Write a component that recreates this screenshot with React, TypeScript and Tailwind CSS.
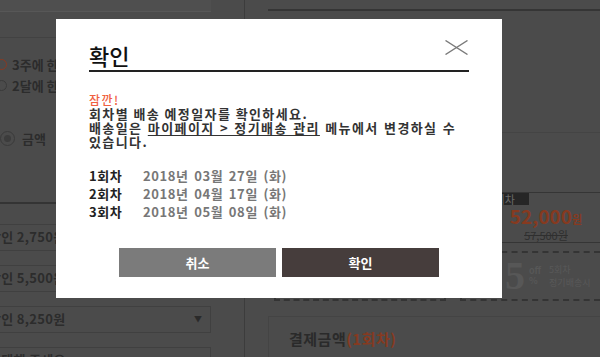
import type { ReactNode } from 'react';

const dates = [
  { no: '1회차', date: '2018년 03월 27일 (화)' },
  { no: '2회차', date: '2018년 04월 17일 (화)' },
  { no: '3회차', date: '2018년 05월 08일 (화)' },
];

const selects = ['할인 2,750원', '할인 5,500원', '할인 8,250원', '선택해 주세요.'];

function Radio({ checked, children }: { checked?: boolean; children: ReactNode }) {
  return (
    <div className="flex h-[21px] items-center gap-[5px] -ml-[4px]">
      <span
        className={`h-[11px] w-[11px] rounded-full border ${
          checked ? 'border-[#8a3a22]' : 'border-[#3a3a3a]'
        }`}
      />
      <span className="text-[13px] font-bold text-[#2c2c2c]">{children}</span>
    </div>
  );
}

function Backdrop() {
  return (
    <div className="flex h-full w-full bg-[#4b4b4b] text-[#2c2c2c]">
      <div className="w-[245px] shrink-0 border-r border-[#3c3c3c]">
        <div className="w-[211px]">
          <div className="h-[12px] border-b border-[#575757] bg-[#4f4f4f]" />
          <div className="h-[26px] border-b border-[#424242]" />
          <div className="flex flex-col pt-[16px]">
            <Radio checked>3주에 한번</Radio>
            <Radio>2달에 한번</Radio>
          </div>
          <div className="mt-[33px] flex items-center gap-[7px]">
            <span className="flex h-[15px] w-[15px] items-center justify-center rounded-full border border-[#3a3a3a]">
              <span className="h-[7px] w-[7px] rounded-full bg-[#3c3c3c]" />
            </span>
            <span className="text-[13px] font-bold">금액</span>
          </div>
          <div className="mt-[53px] border-b-2 border-[#343434]" />
          <div className="mt-[20px] flex flex-col gap-[14px]">
            {selects.map((s) => (
              <div
                key={s}
                className="-ml-[14px] flex h-[27px] items-center justify-between border border-[#404040] pl-[2px] pr-[8px]"
              >
                <span className="text-[13px] font-bold tracking-[0.3px]">{s}</span>
                <span className="text-[8px] text-[#2a2a2a]">▼</span>
              </div>
            ))}
          </div>
        </div>
      </div>
      <div className="flex-1 pl-[23px]">
        <div className="h-[9px]" />
        <div className="h-[123px] border-t-2 border-[#353535]" />
        <div className="h-[60px] border-t border-[#444444]" />
        <div className="flex h-[51px] border-y border-[#353535]">
          <div className="flex-1" />
          <div className="w-[130px]">
            <div className="flex h-[12px] w-[59px] items-center justify-end bg-[#262626] pr-[14px] text-[11px] text-[#6a6a6a]">
              1회차
            </div>
            <div className="mt-[1px] flex flex-col items-center pl-[22px]">
              <span className="text-[19px] font-bold leading-[20px] text-[#863a20]">
                52,000<span className="text-[11px]">원</span>
              </span>
              <span className="text-[11px] leading-[13px] text-[#2f2f2f] line-through">57,500원</span>
            </div>
          </div>
        </div>
        <div className="mt-[8px] flex gap-[14px] pl-[6px]">
          <div className="h-[50px] w-[172px] border-2 border-dashed border-[#343434]" />
          <div className="flex h-[50px] flex-1 items-center border-2 border-r-0 border-dashed border-[#343434] pl-[43px]">
            <span className="font-['Liberation_Serif',serif] text-[40px] font-bold text-[#575757]">5</span>
            <span className="ml-[4px] flex flex-col text-[9px] font-bold leading-[10px] text-[#575757]">
              <span>off</span>
              <span>%</span>
            </span>
            <span className="ml-[8px] flex flex-col text-[9px] leading-[13px] text-[#595959]">
              <span>5회차</span>
              <span>정기배송시</span>
            </span>
          </div>
        </div>
        <div className="mt-[15px] h-[60px] border-l border-t border-[#444444] pl-[20px] pt-[9px]">
          <span className="text-[15px] font-bold tracking-[0.5px] text-[#2a2a2a]">
            결제금액<span className="text-[#863a20]">(1회차)</span>
          </span>
        </div>
      </div>
    </div>
  );
}

export default function App() {
  return (
    <div className="relative h-[357px] w-[600px] overflow-hidden font-['Noto_Sans_CJK_KR','Noto_Sans',sans-serif]">
      <Backdrop />
      <div className="absolute left-[56px] top-[19px] h-[279px] w-[446px] bg-white px-[33px] pt-[21px]">
        <div className="flex items-start justify-between border-b-2 border-[#222]">
          <h1 className="text-[22px] font-medium leading-[30px] text-[#111]">확인</h1>
          <svg width="23" height="15" viewBox="0 0 23 15" className="mr-px">
            <path d="M0.5 0.5L22.5 14.5M22.5 0.5L0.5 14.5" stroke="#7a7a7a" strokeWidth="1.4" fill="none" />
          </svg>
        </div>
        <div className="mt-[21px] break-keep text-[13px] leading-[14px] tracking-[1.4px]">
          <p className="text-[12px] font-medium text-[#f0603f]">잠깐!</p>
          <p className="font-bold text-[#333]">회차별 배송 예정일자를 확인하세요.</p>
          <p className="font-bold text-[#333] [word-spacing:1px]">
            배송일은 <span className="underline underline-offset-2">마이페이지 &gt; 정기배송 관리</span> 메뉴에서
            변경하실 수 있습니다.
          </p>
        </div>
        <div className="mt-[18px] text-[13px] leading-[18px] tracking-[0.6px]">
          {dates.map((d) => (
            <div key={d.no} className="flex">
              <span className="w-[54px] font-bold text-[#222]">{d.no}</span>
              <span className="font-semibold text-[#777] [word-spacing:2px]">{d.date}</span>
            </div>
          ))}
        </div>
        <div className="mt-[27px] flex justify-center gap-[6px]">
          <button type="button" className="h-[29px] w-[157px] bg-[#7b7b7b] text-[13px] font-bold text-white">
            취소
          </button>
          <button type="button" className="h-[29px] w-[157px] bg-[#463d3c] text-[13px] font-bold text-white">
            확인
          </button>
        </div>
      </div>
    </div>
  );
}
